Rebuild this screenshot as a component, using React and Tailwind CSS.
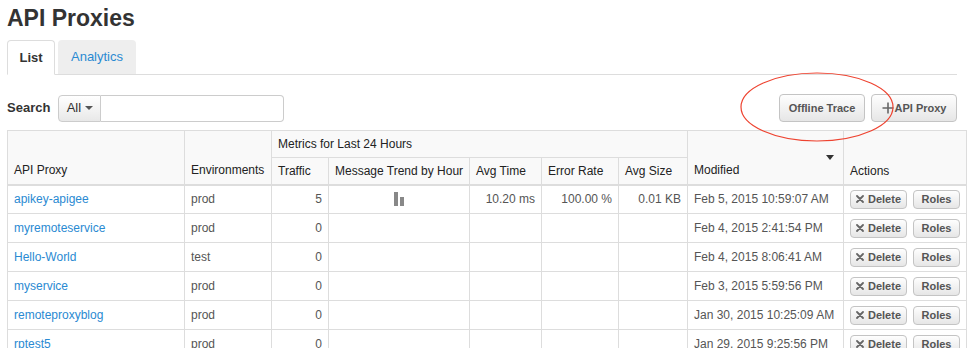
import React from "react";

const rows = [
  { name: "apikey-apigee", env: "prod", traffic: "5", trend: true, avgTime: "10.20 ms", err: "100.00 %", size: "0.01 KB", mod: "Feb 5, 2015 10:59:07 AM" },
  { name: "myremoteservice", env: "prod", traffic: "0", mod: "Feb 4, 2015 2:41:54 PM" },
  { name: "Hello-World", env: "test", traffic: "0", mod: "Feb 4, 2015 8:06:41 AM" },
  { name: "myservice", env: "prod", traffic: "0", mod: "Feb 3, 2015 5:59:56 PM" },
  { name: "remoteproxyblog", env: "prod", traffic: "0", mod: "Jan 30, 2015 10:25:09 AM" },
  { name: "rptest5", env: "prod", traffic: "0", mod: "Jan 29, 2015 9:25:56 PM" },
];

const btn =
  "border border-[#c4c4c4] rounded-[4px] bg-gradient-to-b from-[#fefefe] to-[#e6e6e6] text-[#555] font-bold whitespace-nowrap";

function XIcon() {
  return (
    <svg width="8" height="8" viewBox="0 0 8 8" className="mr-[4px]">
      <path d="M1 1L7 7M7 1L1 7" stroke="#666" strokeWidth="1.8" strokeLinecap="round" />
    </svg>
  );
}

export default function App() {
  const th = "border border-[#ddd] px-[6px] font-normal text-[#222] text-left whitespace-nowrap";
  const td = "border border-[#ddd] px-[6px] py-0 h-[29px] align-middle whitespace-nowrap";
  return (
    <div
      className="relative w-[973px] h-[348px] overflow-hidden bg-white text-[12px] text-[#555]"
      style={{ fontFamily: '"Liberation Sans", Arial, sans-serif' }}
    >
      <div className="pl-[7px] w-[957px]">
        <h1 className="mt-[2px] h-[32px] leading-[32px] text-[23px] font-bold text-[#333]">API Proxies</h1>
        <div className="mt-[6px] flex h-[35px] border-b border-[#ddd]">
          <div className="h-[35px] w-[48px] -mb-px flex items-center justify-center border border-[#ddd] border-b-white bg-white rounded-t-[4px] font-bold text-[13px] text-[#333]">
            List
          </div>
          <div className="ml-[3px] h-[34px] w-[78px] flex items-center justify-center bg-[#eee] rounded-t-[4px] text-[13px] text-[#2a8ad2]">
            Analytics
          </div>
        </div>
        <div className="mt-[19px] flex items-center h-[28px]">
          <label className="font-bold text-[13px] text-[#333] mr-[8px]">Search</label>
          <div className="flex h-[27px]">
            <div className="w-[43px] flex items-center justify-center gap-[4px] border border-[#ccc] rounded-l-[4px] bg-gradient-to-b from-white to-[#e8e8e8] text-[13px] text-[#333]">
              All
              <span className="inline-block w-0 h-0 border-l-[4px] border-r-[4px] border-t-[4px] border-l-transparent border-r-transparent border-t-[#555]" />
            </div>
            <div className="w-[183px] border border-l-0 border-[#ccc] rounded-r-[4px] bg-white" />
          </div>
          <div className="ml-auto flex gap-[6px]">
            <button className={`${btn} h-[28px] w-[86px] text-[11px]`}>Offline Trace</button>
            <button className={`${btn} h-[28px] w-[86px] text-[11px] flex items-center justify-center`}>
              <svg width="12" height="12" viewBox="0 0 12 12" className="mr-[1px]">
                <path d="M6 0.5V11.5M0.5 6H11.5" stroke="#666" strokeWidth="1.6" />
              </svg>
              API Proxy
            </button>
          </div>
        </div>
        <table className="mt-[8px] w-[959px] table-fixed border-collapse">
          <colgroup>
            <col className="w-[177px]" />
            <col className="w-[87px]" />
            <col className="w-[57px]" />
            <col className="w-[141px]" />
            <col className="w-[72px]" />
            <col className="w-[77px]" />
            <col className="w-[69px]" />
            <col className="w-[156px]" />
            <col className="w-[123px]" />
          </colgroup>
          <thead className="bg-[#f9f9f9]">
            <tr className="h-[27px]">
              <th rowSpan={2} className={`${th} align-bottom pb-[5px] border-b-2`}>API Proxy</th>
              <th rowSpan={2} className={`${th} align-bottom pb-[5px] border-b-2`}>Environments</th>
              <th colSpan={5} className={`${th} text-center`}>Metrics for Last 24 Hours</th>
              <th rowSpan={2} className={`${th} align-bottom pb-[5px] border-b-2 relative`}>
                Modified
                <span className="absolute right-[9px] top-[24px] w-0 h-0 border-l-[4px] border-r-[4px] border-t-[5px] border-l-transparent border-r-transparent border-t-[#333]" />
              </th>
              <th rowSpan={2} className={`${th} align-bottom pb-[4px] border-b-2`}>Actions</th>
            </tr>
            <tr className="h-[27px]">
              <th className={`${th} border-b-2`}>Traffic</th>
              <th className={`${th} border-b-2 px-[4px]`}>Message Trend by Hour</th>
              <th className={`${th} border-b-2`}>Avg Time</th>
              <th className={`${th} border-b-2`}>Error Rate</th>
              <th className={`${th} border-b-2`}>Avg Size</th>
            </tr>
          </thead>
          <tbody>
            {rows.map((r) => (
              <tr key={r.name}>
                <td className={`${td} text-[#2a8ad2]`}>{r.name}</td>
                <td className={td}>{r.env}</td>
                <td className={`${td} text-right`}>{r.traffic}</td>
                <td className={td}>
                  {r.trend && (
                    <div className="flex items-end gap-[2px] ml-[59px] h-[14px]">
                      <div className="w-[4px] h-[14px] bg-[#888]" />
                      <div className="w-[4px] h-[9px] bg-[#888]" />
                    </div>
                  )}
                </td>
                <td className={`${td} text-right`}>{r.avgTime || ""}</td>
                <td className={`${td} text-right`}>{r.err || ""}</td>
                <td className={`${td} text-right`}>{r.size || ""}</td>
                <td className={td}>{r.mod}</td>
                <td className={td}>
                  <div className="flex gap-[6px]">
                    <button className={`${btn} h-[19px] w-[57px] text-[11px] flex items-center justify-center`}>
                      <XIcon />
                      Delete
                    </button>
                    <button className={`${btn} h-[19px] w-[47px] text-[11px]`}>Roles</button>
                  </div>
                </td>
              </tr>
            ))}
          </tbody>
        </table>
      </div>
      <svg className="absolute left-[740px] top-[72px]" width="156" height="72" viewBox="0 0 156 72">
        <ellipse cx="77" cy="35" rx="76" ry="34" fill="none" stroke="#ee4330" strokeWidth="1.2" />
      </svg>
    </div>
  );
}
